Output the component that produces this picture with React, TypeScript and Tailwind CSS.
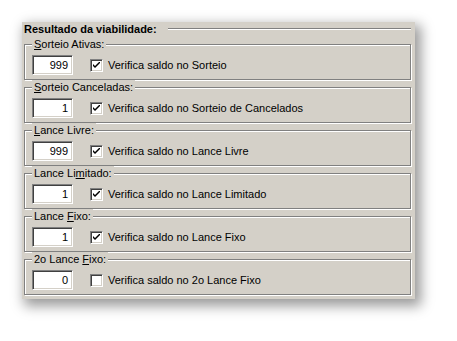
import React from "react";

const font = { fontFamily: '"Liberation Sans", Arial, sans-serif' };

function U({ children }: { children: React.ReactNode }) {
  return <span className="underline underline-offset-[1px]">{children}</span>;
}

function Check({ checked }: { checked: boolean }) {
  return (
    <div className="w-[13px] h-[13px] bg-white border-t border-l border-t-[#808080] border-l-[#808080] border-b border-r border-b-white border-r-white shadow-[inset_1px_1px_0_#404040,inset_-1px_-1px_0_#d4d0c8] flex items-center justify-center">
      {checked && (
        <svg width="7" height="7" viewBox="0 0 7 7">
          <path d="M0 2 L0 4 L2 6 L7 1 L7 -1 L2 4 Z" fill="#000" />
        </svg>
      )}
    </div>
  );
}

function Group({
  label,
  value,
  text,
  checked,
}: {
  label: React.ReactNode;
  value: string;
  text: string;
  checked: boolean;
}) {
  return (
    <div className="relative h-[36px] border border-[#808080] shadow-[inset_1px_1px_0_#fff,1px_1px_0_#fff] flex items-start pl-[7px] pt-[10px]">
      <span className="absolute left-[7px] -top-[8px] px-[2px] bg-[#d4d0c8] leading-[14px] text-[11px] text-black">
        {label}
      </span>
      <div className="w-[41px] h-[20px] bg-white border-t border-l border-t-[#808080] border-l-[#808080] border-b border-r border-b-white border-r-white shadow-[inset_1px_1px_0_#404040,inset_-1px_-1px_0_#d4d0c8] flex items-center justify-end pr-[4px] text-[11px] text-black">
        {value}
      </div>
      <div className="flex items-center ml-[17px] h-[20px]">
        <Check checked={checked} />
        <span className="ml-[5px] text-[11px] text-black">{text}</span>
      </div>
    </div>
  );
}

export default function App() {
  return (
    <div className="w-[457px] h-[341px] bg-white pt-[22px] pl-[22px]" style={font}>
      <div className="w-[393px] h-[277px] bg-[#d4d0c8] pl-[2px] pr-[4px] shadow-[4px_5px_12px_2px_rgba(0,0,0,0.4)]">
        <div className="h-[14px] flex items-center">
          <span className="text-[11px] font-bold text-black leading-[14px]">
            Resultado da viabilidade:
          </span>
          <div className="flex-1 ml-[11px] h-[2px] border-t border-t-[#808080] border-b border-b-white" />
        </div>
        <div className="mt-[8px] flex flex-col gap-[7px]">
          <Group
            label={<><U>S</U>orteio Ativas:</>}
            value="999"
            text="Verifica saldo no Sorteio"
            checked
          />
          <Group
            label={<><U>S</U>orteio Canceladas:</>}
            value="1"
            text="Verifica saldo no Sorteio de Cancelados"
            checked
          />
          <Group
            label={<><U>L</U>ance Livre:</>}
            value="999"
            text="Verifica saldo no Lance Livre"
            checked
          />
          <Group
            label={<>Lance Li<U>m</U>itado:</>}
            value="1"
            text="Verifica saldo no Lance Limitado"
            checked
          />
          <Group
            label={<>Lance <U>F</U>ixo:</>}
            value="1"
            text="Verifica saldo no Lance Fixo"
            checked
          />
          <Group
            label={<>2o Lance <U>F</U>ixo:</>}
            value="0"
            text="Verifica saldo no 2o Lance Fixo"
            checked={false}
          />
        </div>
      </div>
    </div>
  );
}
